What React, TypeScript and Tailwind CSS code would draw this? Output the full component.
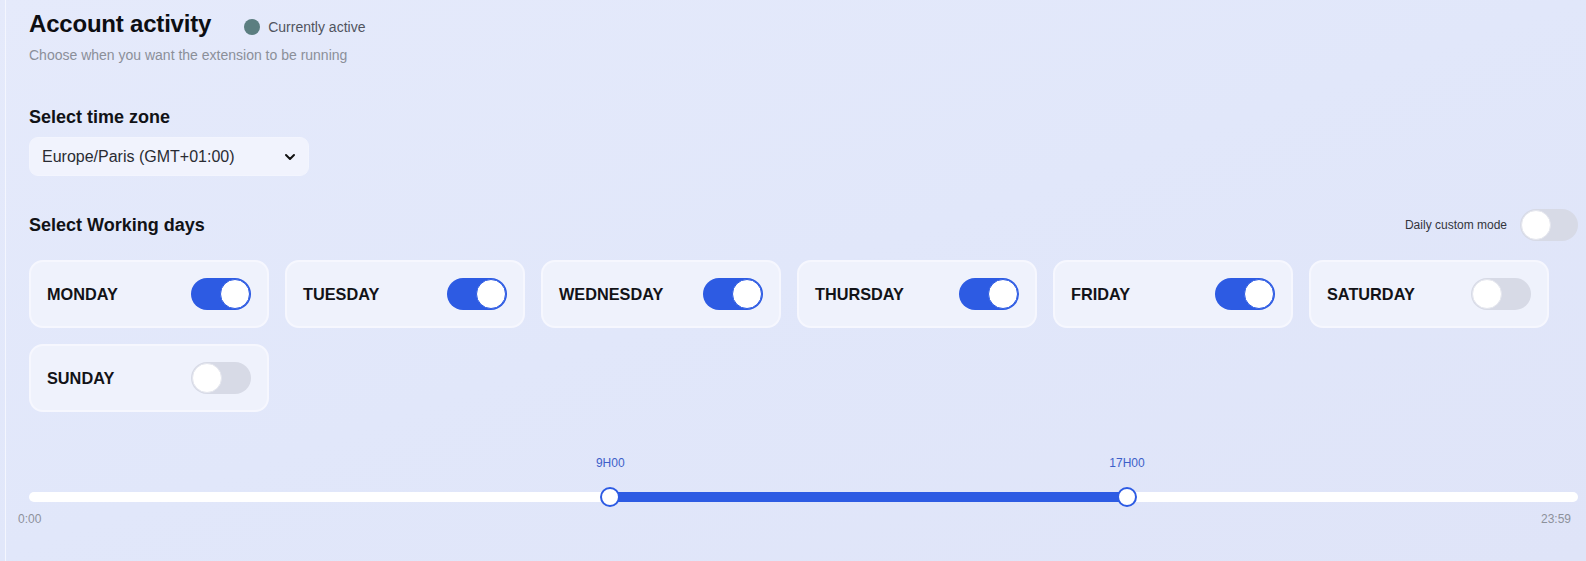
import React, { useState } from "react";
import { ChevronDown } from "lucide-react";

const DAYS: { name: string; on: boolean }[] = [
  { name: "MONDAY", on: true },
  { name: "TUESDAY", on: true },
  { name: "WEDNESDAY", on: true },
  { name: "THURSDAY", on: true },
  { name: "FRIDAY", on: true },
  { name: "SATURDAY", on: false },
  { name: "SUNDAY", on: false },
];

const MAX_MIN = 1439;

function Toggle({ on, onChange, wide = true }: { on: boolean; onChange: () => void; wide?: boolean }) {
  return (
    <button
      type="button"
      onClick={onChange}
      className={`relative flex h-[32px] shrink-0 items-center rounded-full p-px ${wide ? "w-[60px]" : "w-[58px]"} ${
        on ? "justify-end bg-[#2d5be3]" : "justify-start bg-[#d7dae6]"
      }`}
    >
      <span
        className={`block size-[30px] rounded-full bg-white ${
          on ? "border-[1.5px] border-[#2d5be3]" : "border border-[#e4e6ee]"
        }`}
      />
    </button>
  );
}

function RangeSlider({ start, end }: { start: number; end: number }) {
  const pct = (v: number) => (v / MAX_MIN) * 100;
  const fmt = (v: number) => `${Math.floor(v / 60)}H${String(v % 60).padStart(2, "0")}`;
  return (
    <div className="mt-[43px]">
      <div className="relative h-4">
        {[start, end].map((v) => (
          <span
            key={v}
            className="absolute top-0 -translate-x-1/2 text-[12px] leading-4 text-[#3d5fc9]"
            style={{ left: `${pct(v)}%` }}
          >
            {fmt(v)}
          </span>
        ))}
      </div>
      <div className="relative mt-[21px] h-[10px] rounded-full bg-white">
        <div
          className="absolute inset-y-0 bg-[#2d5be3]"
          style={{ left: `${pct(start)}%`, width: `${pct(end) - pct(start)}%` }}
        />
        {[start, end].map((v) => (
          <span
            key={v}
            className="absolute top-1/2 size-[20px] -translate-x-1/2 -translate-y-1/2 rounded-full border-2 border-[#2d5be3] bg-white"
            style={{ left: `${pct(v)}%` }}
          />
        ))}
      </div>
      <div className="-ml-[11px] mr-[7px] mt-[9px] flex justify-between text-[12px] leading-4 text-[#8d919b]">
        <span>0:00</span>
        <span>23:59</span>
      </div>
    </div>
  );
}

export default function App() {
  const [days, setDays] = useState(DAYS);
  const [custom, setCustom] = useState(false);

  return (
    <div className="min-h-screen bg-gradient-to-br from-[#e5eafb] via-[#e1e7fa] to-[#dfe4f8] pl-[5px] font-['Liberation_Sans',Arial,sans-serif]">
      <div className="min-h-screen border-l border-[#f4f6fe] pl-[23px] pr-[8px] pt-[10px]">
        {/* Header */}
        <div className="flex items-center">
          <h1 className="text-[24px] font-bold leading-[28px] tracking-[-0.2px] text-[#0d0e12]">Account activity</h1>
          <div className="ml-[33px] flex items-center pt-[6px]">
            <span className="size-[16px] rounded-full bg-[#5b7e80]" />
            <span className="ml-[8px] text-[14px] text-[#50545e]">Currently active</span>
          </div>
        </div>
        <p className="mt-[9px] text-[14px] leading-4 text-[#8b8f99]">Choose when you want the extension to be running</p>

        {/* Time zone */}
        <h2 className="mt-[43px] text-[18px] font-bold leading-[22px] text-[#111216]">Select time zone</h2>
        <button
          type="button"
          className="mt-[9px] flex h-[39px] w-[280px] items-center justify-between rounded-[9px] border border-[#f3f5fe] bg-[#f1f3fd] pl-[12px] pr-[10px] text-[16px] text-[#2a2c33]"
        >
          <span>Europe/Paris (GMT+01:00)</span>
          <ChevronDown size={16} strokeWidth={3} className="text-[#111]" />
        </button>

        {/* Working days */}
        <div className="mt-[33px] flex h-[32px] items-center justify-between">
          <h2 className="text-[18px] font-bold leading-[22px] text-[#111216]">Select Working days</h2>
          <div className="flex items-center gap-[13px]">
            <span className="text-[12px] text-[#33353c]">Daily custom mode</span>
            <Toggle on={custom} onChange={() => setCustom(!custom)} wide={false} />
          </div>
        </div>

        <div className="mt-[19px] flex flex-wrap gap-4">
          {days.map((d, i) => (
            <div
              key={d.name}
              className="flex h-[68px] w-[240px] items-center justify-between rounded-[14px] border-2 border-[#f6f7fe] bg-[#eff2fc] px-[16px]"
            >
              <span className="text-[16.3px] font-bold text-[#121317]">{d.name}</span>
              <Toggle
                on={d.on}
                onChange={() => setDays(days.map((x, j) => (j === i ? { ...x, on: !x.on } : x)))}
              />
            </div>
          ))}
        </div>

        <RangeSlider start={540} end={1020} />
      </div>
    </div>
  );
}
